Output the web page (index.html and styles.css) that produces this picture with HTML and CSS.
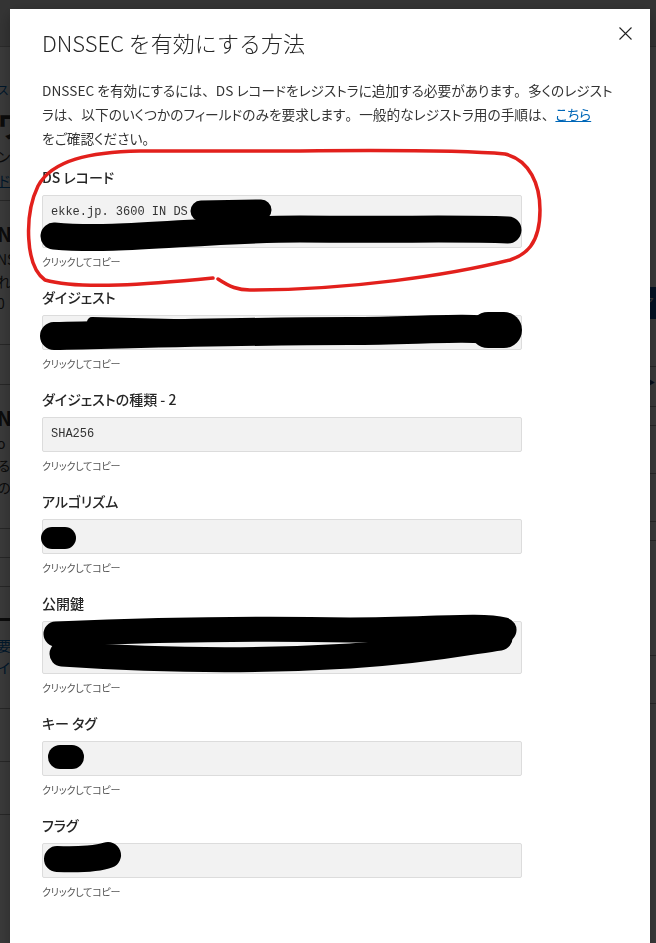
FILE: index.html
```html
<!DOCTYPE html>
<html lang="ja">
<head>
  <meta charset="UTF-8">
  <meta name="viewport" content="width=device-width, initial-scale=1.0">
  <title>DNSSEC を有効にする方法</title>
  <link rel="stylesheet" href="styles.css">
</head>
<body>
  <!-- page behind the dialog -->
  <div class="page">
    <div class="page-top"></div>
    <div class="page-body">
      <div class="page-main">
        <div class="crumb">ストレージ</div>
        <h2 class="page-heading">ワークスペース</h2>
        <p class="page-text">ンバーの設定</p>
        <a class="page-link" href="#">ドメインの管理</a>
        <div class="page-row">
          <h3 class="row-title">NS レコード</h3>
          <p class="row-text">NS<br>れています<br>0</p>
        </div>
        <div class="page-row short"></div>
        <div class="page-row">
          <h3 class="row-title">N</h3>
          <p class="row-text">o<br>る<br>の</p>
        </div>
        <div class="page-row tiny"></div>
        <div class="page-row tiny"></div>
        <div class="page-row">
          <h3 class="row-title">ー</h3>
          <p class="row-text blue">要<br>イ</p>
        </div>
        <div class="page-row mid"></div>
        <div class="page-row mid"></div>
      </div>
      <div class="page-side">
        <div class="side-button">ア</div>
        <div class="side-row"></div>
        <div class="side-row arrow">▶</div>
        <div class="side-row tiny"></div>
        <div class="side-row"></div>
        <div class="side-row"></div>
        <div class="side-row tiny"></div>
        <div class="side-row big"></div>
        <div class="side-row"></div>
      </div>
    </div>
  </div>
  <div class="backdrop"></div>

  <div class="dialog" role="dialog">
    <button class="close" aria-label="閉じる">
      <svg width="13" height="13" viewBox="0 0 13 13"><path d="M0.5 0.5 L12.5 12.5 M12.5 0.5 L0.5 12.5" stroke="#222" stroke-width="1.1" fill="none"/></svg>
    </button>
    <h1 class="dialog-title">DNSSEC を有効にする方法</h1>
    <p class="intro">DNSSEC を有効にするには<span class="punct">、</span>DS レコードをレジストラに追加する必要があります<span class="punct">。</span>多くのレジスト<br>ラは<span class="punct">、</span>以下のいくつかのフィールドのみを要求します<span class="punct">。</span>一般的なレジストラ用の手順は<span class="punct">、</span><a href="#">こちら</a><br>をご確認ください。</p>

    <div class="field">
      <div class="field-label">DS レコード</div>
      <div class="field-value tall">ekke.jp. 3600 IN DS</div>
      <div class="field-hint">クリックしてコピー</div>
    </div>
    <div class="field">
      <div class="field-label">ダイジェスト</div>
      <div class="field-value"></div>
      <div class="field-hint">クリックしてコピー</div>
    </div>
    <div class="field">
      <div class="field-label">ダイジェストの種類 - 2</div>
      <div class="field-value">SHA256</div>
      <div class="field-hint">クリックしてコピー</div>
    </div>
    <div class="field">
      <div class="field-label">アルゴリズム</div>
      <div class="field-value"></div>
      <div class="field-hint">クリックしてコピー</div>
    </div>
    <div class="field">
      <div class="field-label">公開鍵</div>
      <div class="field-value tall"></div>
      <div class="field-hint">クリックしてコピー</div>
    </div>
    <div class="field">
      <div class="field-label">キー タグ</div>
      <div class="field-value"></div>
      <div class="field-hint">クリックしてコピー</div>
    </div>
    <div class="field">
      <div class="field-label">フラグ</div>
      <div class="field-value"></div>
      <div class="field-hint">クリックしてコピー</div>
    </div>
  </div>

  <!-- hand-drawn marks on the screenshot -->
  <svg class="marks" width="656" height="943" viewBox="0 0 656 943">
    <path d="M213 278 C150 284 80 290 45 280 C25 266 24 215 38 186 C52 160 90 152 140 151 L300 151 C400 150 470 151 505 154 C530 160 540 185 540 210 C540 245 525 255 510 260 C450 275 350 290 250 290 C238 290 230 287 218 279" stroke="#e2201c" stroke-width="3.5" fill="none" stroke-linecap="round"/>
    <g stroke="#000" fill="none" stroke-linecap="round">
      <path d="M201 211 L261 210" stroke-width="21"/>
      <path d="M54 236 C120 242 200 229 300 229 C400 230 460 228 508 230" stroke-width="27"/>
      <path d="M54 336 C150 334 250 331 350 331 C420 331 460 326 504 331" stroke-width="28"/>
      <path d="M92 322 L260 326" stroke-width="10"/>
      <path d="M488 330 L504 330" stroke-width="36"/>
      <path d="M56 634 C150 630 250 628 350 630 C430 630 480 624 504 630" stroke-width="25"/>
      <path d="M62 654 C150 660 250 662 350 656 C430 651 470 642 500 638" stroke-width="25"/>
      <path d="M52 538 L65 538" stroke-width="22"/>
      <path d="M60 757 L72 757" stroke-width="24"/>
      <path d="M57 859 C80 860 100 858 108 855" stroke-width="26"/>
    </g>
  </svg>
</body>
</html>
```

FILE: styles.css
```css
/* General Reset */
* {
  margin: 0;
  padding: 0;
  box-sizing: border-box;
}

body {
  font-family: "Noto Sans CJK JP", "Noto Sans", sans-serif;
  background-color: #fff;
  color: #333;
  width: 656px;
  height: 943px;
  overflow: hidden;
}

/* Page behind the dialog */
.page {
  height: 943px;
}

.page-top {
  height: 47px;
  background: #e2e2e2;
  border-bottom: 1px solid #bbb;
}

.page-body {
  display: flex;
  justify-content: space-between;
}

.page-main {
  width: 300px;
  margin-left: -3px;
}

.crumb {
  margin-top: 34px;
  font-size: 12px;
  color: #0067b8;
}

.page-heading {
  margin-top: 8px;
  font-size: 30px;
  font-weight: 700;
  line-height: 36px;
}

.page-text {
  margin-top: 4px;
  font-size: 14px;
}

.page-link {
  display: block;
  margin-top: 4px;
  font-size: 14px;
  color: #0067b8;
  padding-bottom: 10px;
  border-bottom: 1px solid #aaa;
}

.page-row {
  padding: 18px 0 30px;
  border-bottom: 1px solid #aaa;
}

.page-row.short {
  height: 40px;
  padding: 0;
}

.page-row.tiny {
  height: 29px;
  padding: 0;
}

.page-row.mid {
  height: 53px;
  padding: 0;
}

.row-title {
  font-size: 20px;
  font-weight: 600;
}

.row-text {
  font-size: 14px;
  line-height: 22px;
}

.row-text.blue {
  color: #0067b8;
}

.page-side {
  width: 120px;
}

.side-button {
  margin-top: 240px;
  height: 32px;
  background: #0f4c9a;
  color: #fff;
  text-align: right;
  font-size: 12px;
  padding: 6px 2px;
}

.side-row {
  height: 48px;
  border-bottom: 1px solid #aaa;
}

.side-row.arrow {
  height: 40px;
  text-align: right;
  color: #1b3a6b;
  font-size: 20px;
}

.side-row.tiny {
  height: 19px;
}

.side-row.big {
  height: 115px;
}

.backdrop {
  position: fixed;
  inset: 0;
  background: rgba(0, 0, 0, 0.77);
}

/* Dialog */
.dialog {
  position: fixed;
  top: 9px;
  left: 10px;
  width: 640px;
  bottom: -20px;
  background: #fff;
  padding: 19px 32px 0;
  box-shadow: 0 4px 16px rgba(0, 0, 0, 0.3);
}

.close {
  position: absolute;
  top: 18px;
  right: 18px;
  width: 13px;
  height: 13px;
  border: none;
  background: none;
  cursor: pointer;
  display: flex;
}

.dialog-title {
  font-size: 22px;
  font-weight: 300;
  line-height: 28px;
  color: #262626;
  margin-bottom: 22px;
}

.intro {
  font-size: 13.7px;
  line-height: 24px;
  font-feature-settings: "palt";
  color: #333;
  margin-bottom: 17px;
  white-space: nowrap;
}

/* keep the full width of 、 and 。 */
.intro .punct {
  font-feature-settings: normal;
}

.intro a {
  color: #0067b8;
  text-decoration: underline;
}

.field {
  margin-bottom: 17px;
}

.field-label {
  font-size: 14px;
  font-weight: 500;
  line-height: 20px;
  font-feature-settings: "palt";
  color: #262626;
  margin-bottom: 8px;
}

.field-value {
  width: 480px;
  min-height: 35px;
  padding: 8px 8px;
  font-family: "Liberation Mono", monospace;
  font-size: 12px;
  line-height: 17px;
  color: #333;
  background: #f2f2f2;
  border: 1px solid #dcdcdc;
  border-radius: 2px;
  cursor: pointer;
}

.field-value.tall {
  min-height: 53px;
}

.field-hint {
  margin-top: 6px;
  font-size: 10px;
  line-height: 16px;
  font-feature-settings: "palt";
  letter-spacing: -0.2px;
  color: #555;
}

/* hand-drawn marks */
.marks {
  position: absolute;
  top: 0;
  left: 0;
  pointer-events: none;
}
```
